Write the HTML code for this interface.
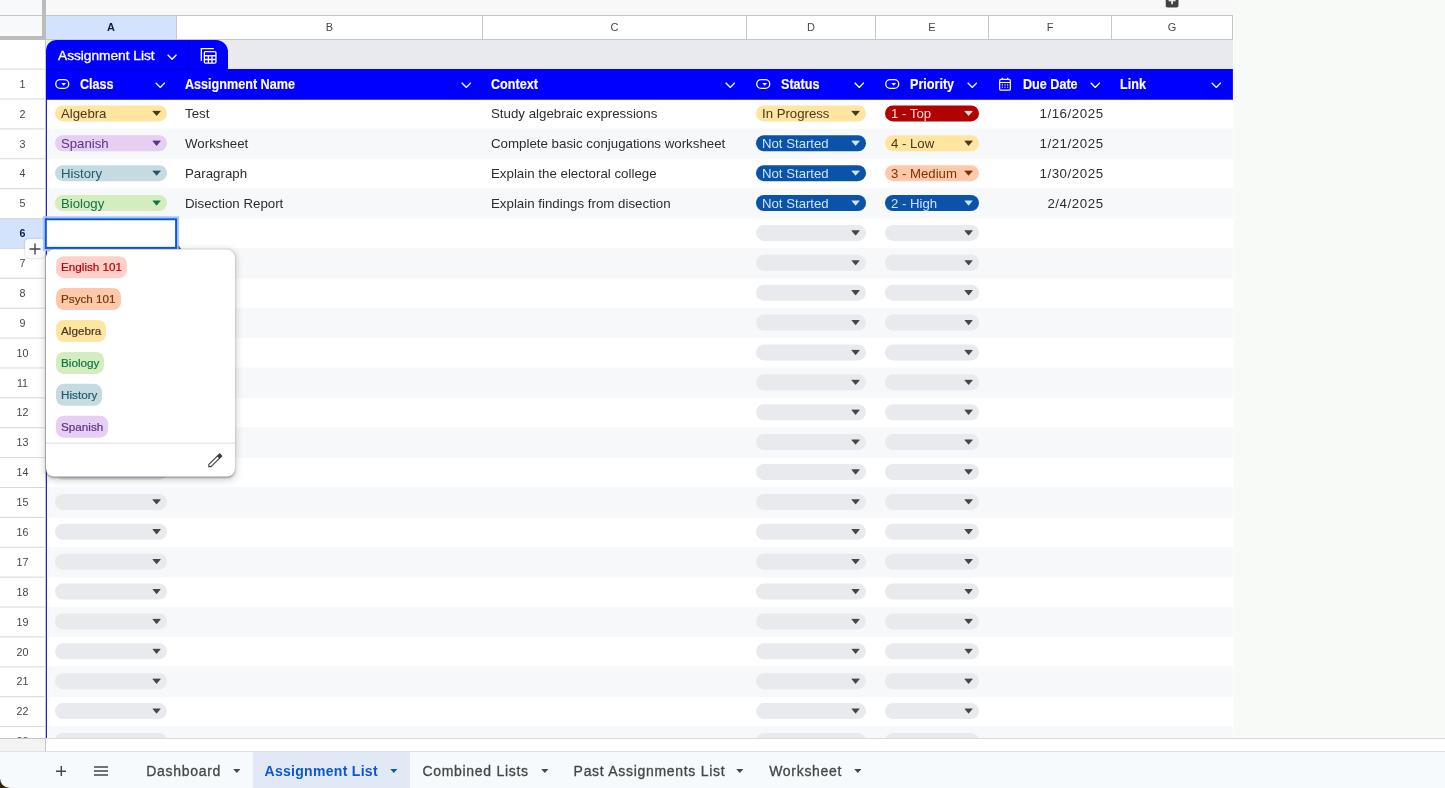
<!DOCTYPE html><html><head><meta charset="utf-8"><title>Assignment List</title><style>
*{box-sizing:border-box;margin:0;padding:0}
html,body{width:1445px;height:788px;overflow:hidden}
body{position:relative;background:#f8faf7;font-family:"Liberation Sans",sans-serif;font-size:13px;color:#1f1f1f}
.abs{position:absolute}
#stage{position:absolute;left:0;top:0;width:1445px;height:788px;will-change:transform}
#grid{position:absolute;left:0;top:0;width:1233px;height:738px;overflow:hidden;background:#fff}
.topstrip{left:0;top:0;width:1233px;height:15px;background:#f8f8f8}
.colhdr{top:15px;height:25px;background:#fff;border-top:1px solid #c4c7c5;border-bottom:1px solid #c4c7c5;border-right:1px solid #c4c7c5;font-size:11px;color:#444746;text-align:center;line-height:22px}
.colhdr.sel{background:#d3e3fd;color:#041e49;font-weight:bold}
.rowhdr{left:0;width:45px;font-size:10.7px;color:#444746;text-align:center}
.rowhdr span{position:absolute;left:0;width:45px;text-align:center;line-height:12px}
.rowhdr.sel{color:#041e49;font-weight:bold}
.band{left:47px;width:1186px}
.cell{top:0;font-size:13.3px;line-height:16px;white-space:nowrap;color:#2b2d30}
.date{letter-spacing:.55px}
.chip{top:0;height:16.2px;border-radius:8.1px;font-size:13.2px;line-height:17.4px;padding-left:6.3px;white-space:nowrap;overflow:hidden}
.chip svg{position:absolute;right:6.3px;top:5.2px}
.hd{color:#fff;font-weight:bold;font-size:14px;line-height:16px;white-space:nowrap;transform-origin:0 50%;transform:scaleX(.9);-webkit-text-stroke:.15px #fff}
.tabtxt{font-size:14px;color:#444746;white-space:nowrap;letter-spacing:.7px;line-height:18px;-webkit-text-stroke:.3px #444746}
.pop{left:46px;top:0;transform:translateY(249.6px);width:189px;height:226.6px;background:#fff;border-radius:8px;box-shadow:0 1px 2px rgba(60,64,67,.45),0 2px 6px 2px rgba(60,64,67,.2)}
.pchip{left:10px;height:22px;border-radius:8px;font-size:11.7px;line-height:22px;padding:0 5px;white-space:nowrap}
</style></head><body>
<div id="stage">
<div id="grid">
<div class="abs topstrip"></div>
<div class="abs" style="left:46px;top:40px;width:1187px;height:29px;background:#e8eaed"></div>
<svg class="abs" style="left:0;top:0" width="1234" height="738" viewBox="0 0 1234 738"><rect x="48.2" y="128.47" width="1186" height="30.54" fill="#f6f8f9"/><rect x="48.2" y="188.24" width="1186" height="30.54" fill="#f6f8f9"/><rect x="48.2" y="248.01" width="1186" height="30.54" fill="#f6f8f9"/><rect x="48.2" y="307.78" width="1186" height="30.54" fill="#f6f8f9"/><rect x="48.2" y="367.55" width="1186" height="30.54" fill="#f6f8f9"/><rect x="48.2" y="427.32" width="1186" height="30.54" fill="#f6f8f9"/><rect x="48.2" y="487.09" width="1186" height="30.54" fill="#f6f8f9"/><rect x="48.2" y="546.86" width="1186" height="30.54" fill="#f6f8f9"/><rect x="48.2" y="606.63" width="1186" height="30.54" fill="#f6f8f9"/><rect x="48.2" y="666.40" width="1186" height="30.54" fill="#f6f8f9"/><rect x="48.2" y="726.17" width="1186" height="30.54" fill="#f6f8f9"/></svg>
<div class="abs chip" style="left:54.7px;transform:translateY(105.38px);width:112.7px;background:#ffe5a0;color:#473821">Algebra<svg width="9.2" height="5.8" viewBox="0 0 9 5" preserveAspectRatio="none"><path d="M0.9 0.3 H8.1 Q8.8 0.3 8.3 0.9 L4.9 4.5 Q4.5 4.9 4.1 4.5 L0.7 0.9 Q0.2 0.3 0.9 0.3Z" fill="#473821"/></svg></div>
<div class="abs cell" style="left:185px;transform:translateY(106.03px)">Test</div>
<div class="abs cell" style="left:491px;transform:translateY(106.03px)">Study algebraic expressions</div>
<div class="abs chip" style="left:755.7px;transform:translateY(105.38px);width:110.7px;background:#ffe5a0;color:#473821">In Progress<svg width="9.2" height="5.8" viewBox="0 0 9 5" preserveAspectRatio="none"><path d="M0.9 0.3 H8.1 Q8.8 0.3 8.3 0.9 L4.9 4.5 Q4.5 4.9 4.1 4.5 L0.7 0.9 Q0.2 0.3 0.9 0.3Z" fill="#473821"/></svg></div>
<div class="abs chip" style="left:884.7px;transform:translateY(105.38px);width:94.7px;background:#b10202;color:#ffdcd8">1 - Top<svg width="9.2" height="5.8" viewBox="0 0 9 5" preserveAspectRatio="none"><path d="M0.9 0.3 H8.1 Q8.8 0.3 8.3 0.9 L4.9 4.5 Q4.5 4.9 4.1 4.5 L0.7 0.9 Q0.2 0.3 0.9 0.3Z" fill="#ffdcd8"/></svg></div>
<div class="abs cell date" style="left:989px;width:114.6px;text-align:right;transform:translateY(106.03px)">1/16/2025</div>
<div class="abs chip" style="left:54.7px;transform:translateY(135.26px);width:112.7px;background:#e6cff2;color:#5a3286">Spanish<svg width="9.2" height="5.8" viewBox="0 0 9 5" preserveAspectRatio="none"><path d="M0.9 0.3 H8.1 Q8.8 0.3 8.3 0.9 L4.9 4.5 Q4.5 4.9 4.1 4.5 L0.7 0.9 Q0.2 0.3 0.9 0.3Z" fill="#5a3286"/></svg></div>
<div class="abs cell" style="left:185px;transform:translateY(135.91px)">Worksheet</div>
<div class="abs cell" style="left:491px;transform:translateY(135.91px)">Complete basic conjugations worksheet</div>
<div class="abs chip" style="left:755.7px;transform:translateY(135.26px);width:110.7px;background:#0a53a8;color:#cbe6f9">Not Started<svg width="9.2" height="5.8" viewBox="0 0 9 5" preserveAspectRatio="none"><path d="M0.9 0.3 H8.1 Q8.8 0.3 8.3 0.9 L4.9 4.5 Q4.5 4.9 4.1 4.5 L0.7 0.9 Q0.2 0.3 0.9 0.3Z" fill="#cbe6f9"/></svg></div>
<div class="abs chip" style="left:884.7px;transform:translateY(135.26px);width:94.7px;background:#ffe5a0;color:#473821">4 - Low<svg width="9.2" height="5.8" viewBox="0 0 9 5" preserveAspectRatio="none"><path d="M0.9 0.3 H8.1 Q8.8 0.3 8.3 0.9 L4.9 4.5 Q4.5 4.9 4.1 4.5 L0.7 0.9 Q0.2 0.3 0.9 0.3Z" fill="#473821"/></svg></div>
<div class="abs cell date" style="left:989px;width:114.6px;text-align:right;transform:translateY(135.91px)">1/21/2025</div>
<div class="abs chip" style="left:54.7px;transform:translateY(165.15px);width:112.7px;background:#c6dbe1;color:#215a6c">History<svg width="9.2" height="5.8" viewBox="0 0 9 5" preserveAspectRatio="none"><path d="M0.9 0.3 H8.1 Q8.8 0.3 8.3 0.9 L4.9 4.5 Q4.5 4.9 4.1 4.5 L0.7 0.9 Q0.2 0.3 0.9 0.3Z" fill="#215a6c"/></svg></div>
<div class="abs cell" style="left:185px;transform:translateY(165.80px)">Paragraph</div>
<div class="abs cell" style="left:491px;transform:translateY(165.80px)">Explain the electoral college</div>
<div class="abs chip" style="left:755.7px;transform:translateY(165.15px);width:110.7px;background:#0a53a8;color:#cbe6f9">Not Started<svg width="9.2" height="5.8" viewBox="0 0 9 5" preserveAspectRatio="none"><path d="M0.9 0.3 H8.1 Q8.8 0.3 8.3 0.9 L4.9 4.5 Q4.5 4.9 4.1 4.5 L0.7 0.9 Q0.2 0.3 0.9 0.3Z" fill="#cbe6f9"/></svg></div>
<div class="abs chip" style="left:884.7px;transform:translateY(165.15px);width:94.7px;background:#ffc8aa;color:#753800">3 - Medium<svg width="9.2" height="5.8" viewBox="0 0 9 5" preserveAspectRatio="none"><path d="M0.9 0.3 H8.1 Q8.8 0.3 8.3 0.9 L4.9 4.5 Q4.5 4.9 4.1 4.5 L0.7 0.9 Q0.2 0.3 0.9 0.3Z" fill="#753800"/></svg></div>
<div class="abs cell date" style="left:989px;width:114.6px;text-align:right;transform:translateY(165.80px)">1/30/2025</div>
<div class="abs chip" style="left:54.7px;transform:translateY(195.03px);width:112.7px;background:#d4edbc;color:#11734b">Biology<svg width="9.2" height="5.8" viewBox="0 0 9 5" preserveAspectRatio="none"><path d="M0.9 0.3 H8.1 Q8.8 0.3 8.3 0.9 L4.9 4.5 Q4.5 4.9 4.1 4.5 L0.7 0.9 Q0.2 0.3 0.9 0.3Z" fill="#11734b"/></svg></div>
<div class="abs cell" style="left:185px;transform:translateY(195.68px)">Disection Report</div>
<div class="abs cell" style="left:491px;transform:translateY(195.68px)">Explain findings from disection</div>
<div class="abs chip" style="left:755.7px;transform:translateY(195.03px);width:110.7px;background:#0a53a8;color:#cbe6f9">Not Started<svg width="9.2" height="5.8" viewBox="0 0 9 5" preserveAspectRatio="none"><path d="M0.9 0.3 H8.1 Q8.8 0.3 8.3 0.9 L4.9 4.5 Q4.5 4.9 4.1 4.5 L0.7 0.9 Q0.2 0.3 0.9 0.3Z" fill="#cbe6f9"/></svg></div>
<div class="abs chip" style="left:884.7px;transform:translateY(195.03px);width:94.7px;background:#0a53a8;color:#cbe6f9">2 - High<svg width="9.2" height="5.8" viewBox="0 0 9 5" preserveAspectRatio="none"><path d="M0.9 0.3 H8.1 Q8.8 0.3 8.3 0.9 L4.9 4.5 Q4.5 4.9 4.1 4.5 L0.7 0.9 Q0.2 0.3 0.9 0.3Z" fill="#cbe6f9"/></svg></div>
<div class="abs cell date" style="left:989px;width:114.6px;text-align:right;transform:translateY(195.68px)">2/4/2025</div>
<div class="abs chip" style="left:755.7px;transform:translateY(224.92px);width:110.7px;background:#e8eaed;color:#444746"><svg width="9.2" height="5.8" viewBox="0 0 9 5" preserveAspectRatio="none"><path d="M0.9 0.3 H8.1 Q8.8 0.3 8.3 0.9 L4.9 4.5 Q4.5 4.9 4.1 4.5 L0.7 0.9 Q0.2 0.3 0.9 0.3Z" fill="#444746"/></svg></div>
<div class="abs chip" style="left:884.7px;transform:translateY(224.92px);width:94.7px;background:#e8eaed;color:#444746"><svg width="9.2" height="5.8" viewBox="0 0 9 5" preserveAspectRatio="none"><path d="M0.9 0.3 H8.1 Q8.8 0.3 8.3 0.9 L4.9 4.5 Q4.5 4.9 4.1 4.5 L0.7 0.9 Q0.2 0.3 0.9 0.3Z" fill="#444746"/></svg></div>
<div class="abs chip" style="left:54.7px;transform:translateY(254.80px);width:112.7px;background:#e8eaed;color:#444746"><svg width="9.2" height="5.8" viewBox="0 0 9 5" preserveAspectRatio="none"><path d="M0.9 0.3 H8.1 Q8.8 0.3 8.3 0.9 L4.9 4.5 Q4.5 4.9 4.1 4.5 L0.7 0.9 Q0.2 0.3 0.9 0.3Z" fill="#444746"/></svg></div>
<div class="abs chip" style="left:755.7px;transform:translateY(254.80px);width:110.7px;background:#e8eaed;color:#444746"><svg width="9.2" height="5.8" viewBox="0 0 9 5" preserveAspectRatio="none"><path d="M0.9 0.3 H8.1 Q8.8 0.3 8.3 0.9 L4.9 4.5 Q4.5 4.9 4.1 4.5 L0.7 0.9 Q0.2 0.3 0.9 0.3Z" fill="#444746"/></svg></div>
<div class="abs chip" style="left:884.7px;transform:translateY(254.80px);width:94.7px;background:#e8eaed;color:#444746"><svg width="9.2" height="5.8" viewBox="0 0 9 5" preserveAspectRatio="none"><path d="M0.9 0.3 H8.1 Q8.8 0.3 8.3 0.9 L4.9 4.5 Q4.5 4.9 4.1 4.5 L0.7 0.9 Q0.2 0.3 0.9 0.3Z" fill="#444746"/></svg></div>
<div class="abs chip" style="left:54.7px;transform:translateY(284.69px);width:112.7px;background:#e8eaed;color:#444746"><svg width="9.2" height="5.8" viewBox="0 0 9 5" preserveAspectRatio="none"><path d="M0.9 0.3 H8.1 Q8.8 0.3 8.3 0.9 L4.9 4.5 Q4.5 4.9 4.1 4.5 L0.7 0.9 Q0.2 0.3 0.9 0.3Z" fill="#444746"/></svg></div>
<div class="abs chip" style="left:755.7px;transform:translateY(284.69px);width:110.7px;background:#e8eaed;color:#444746"><svg width="9.2" height="5.8" viewBox="0 0 9 5" preserveAspectRatio="none"><path d="M0.9 0.3 H8.1 Q8.8 0.3 8.3 0.9 L4.9 4.5 Q4.5 4.9 4.1 4.5 L0.7 0.9 Q0.2 0.3 0.9 0.3Z" fill="#444746"/></svg></div>
<div class="abs chip" style="left:884.7px;transform:translateY(284.69px);width:94.7px;background:#e8eaed;color:#444746"><svg width="9.2" height="5.8" viewBox="0 0 9 5" preserveAspectRatio="none"><path d="M0.9 0.3 H8.1 Q8.8 0.3 8.3 0.9 L4.9 4.5 Q4.5 4.9 4.1 4.5 L0.7 0.9 Q0.2 0.3 0.9 0.3Z" fill="#444746"/></svg></div>
<div class="abs chip" style="left:54.7px;transform:translateY(314.57px);width:112.7px;background:#e8eaed;color:#444746"><svg width="9.2" height="5.8" viewBox="0 0 9 5" preserveAspectRatio="none"><path d="M0.9 0.3 H8.1 Q8.8 0.3 8.3 0.9 L4.9 4.5 Q4.5 4.9 4.1 4.5 L0.7 0.9 Q0.2 0.3 0.9 0.3Z" fill="#444746"/></svg></div>
<div class="abs chip" style="left:755.7px;transform:translateY(314.57px);width:110.7px;background:#e8eaed;color:#444746"><svg width="9.2" height="5.8" viewBox="0 0 9 5" preserveAspectRatio="none"><path d="M0.9 0.3 H8.1 Q8.8 0.3 8.3 0.9 L4.9 4.5 Q4.5 4.9 4.1 4.5 L0.7 0.9 Q0.2 0.3 0.9 0.3Z" fill="#444746"/></svg></div>
<div class="abs chip" style="left:884.7px;transform:translateY(314.57px);width:94.7px;background:#e8eaed;color:#444746"><svg width="9.2" height="5.8" viewBox="0 0 9 5" preserveAspectRatio="none"><path d="M0.9 0.3 H8.1 Q8.8 0.3 8.3 0.9 L4.9 4.5 Q4.5 4.9 4.1 4.5 L0.7 0.9 Q0.2 0.3 0.9 0.3Z" fill="#444746"/></svg></div>
<div class="abs chip" style="left:54.7px;transform:translateY(344.46px);width:112.7px;background:#e8eaed;color:#444746"><svg width="9.2" height="5.8" viewBox="0 0 9 5" preserveAspectRatio="none"><path d="M0.9 0.3 H8.1 Q8.8 0.3 8.3 0.9 L4.9 4.5 Q4.5 4.9 4.1 4.5 L0.7 0.9 Q0.2 0.3 0.9 0.3Z" fill="#444746"/></svg></div>
<div class="abs chip" style="left:755.7px;transform:translateY(344.46px);width:110.7px;background:#e8eaed;color:#444746"><svg width="9.2" height="5.8" viewBox="0 0 9 5" preserveAspectRatio="none"><path d="M0.9 0.3 H8.1 Q8.8 0.3 8.3 0.9 L4.9 4.5 Q4.5 4.9 4.1 4.5 L0.7 0.9 Q0.2 0.3 0.9 0.3Z" fill="#444746"/></svg></div>
<div class="abs chip" style="left:884.7px;transform:translateY(344.46px);width:94.7px;background:#e8eaed;color:#444746"><svg width="9.2" height="5.8" viewBox="0 0 9 5" preserveAspectRatio="none"><path d="M0.9 0.3 H8.1 Q8.8 0.3 8.3 0.9 L4.9 4.5 Q4.5 4.9 4.1 4.5 L0.7 0.9 Q0.2 0.3 0.9 0.3Z" fill="#444746"/></svg></div>
<div class="abs chip" style="left:54.7px;transform:translateY(374.34px);width:112.7px;background:#e8eaed;color:#444746"><svg width="9.2" height="5.8" viewBox="0 0 9 5" preserveAspectRatio="none"><path d="M0.9 0.3 H8.1 Q8.8 0.3 8.3 0.9 L4.9 4.5 Q4.5 4.9 4.1 4.5 L0.7 0.9 Q0.2 0.3 0.9 0.3Z" fill="#444746"/></svg></div>
<div class="abs chip" style="left:755.7px;transform:translateY(374.34px);width:110.7px;background:#e8eaed;color:#444746"><svg width="9.2" height="5.8" viewBox="0 0 9 5" preserveAspectRatio="none"><path d="M0.9 0.3 H8.1 Q8.8 0.3 8.3 0.9 L4.9 4.5 Q4.5 4.9 4.1 4.5 L0.7 0.9 Q0.2 0.3 0.9 0.3Z" fill="#444746"/></svg></div>
<div class="abs chip" style="left:884.7px;transform:translateY(374.34px);width:94.7px;background:#e8eaed;color:#444746"><svg width="9.2" height="5.8" viewBox="0 0 9 5" preserveAspectRatio="none"><path d="M0.9 0.3 H8.1 Q8.8 0.3 8.3 0.9 L4.9 4.5 Q4.5 4.9 4.1 4.5 L0.7 0.9 Q0.2 0.3 0.9 0.3Z" fill="#444746"/></svg></div>
<div class="abs chip" style="left:54.7px;transform:translateY(404.23px);width:112.7px;background:#e8eaed;color:#444746"><svg width="9.2" height="5.8" viewBox="0 0 9 5" preserveAspectRatio="none"><path d="M0.9 0.3 H8.1 Q8.8 0.3 8.3 0.9 L4.9 4.5 Q4.5 4.9 4.1 4.5 L0.7 0.9 Q0.2 0.3 0.9 0.3Z" fill="#444746"/></svg></div>
<div class="abs chip" style="left:755.7px;transform:translateY(404.23px);width:110.7px;background:#e8eaed;color:#444746"><svg width="9.2" height="5.8" viewBox="0 0 9 5" preserveAspectRatio="none"><path d="M0.9 0.3 H8.1 Q8.8 0.3 8.3 0.9 L4.9 4.5 Q4.5 4.9 4.1 4.5 L0.7 0.9 Q0.2 0.3 0.9 0.3Z" fill="#444746"/></svg></div>
<div class="abs chip" style="left:884.7px;transform:translateY(404.23px);width:94.7px;background:#e8eaed;color:#444746"><svg width="9.2" height="5.8" viewBox="0 0 9 5" preserveAspectRatio="none"><path d="M0.9 0.3 H8.1 Q8.8 0.3 8.3 0.9 L4.9 4.5 Q4.5 4.9 4.1 4.5 L0.7 0.9 Q0.2 0.3 0.9 0.3Z" fill="#444746"/></svg></div>
<div class="abs chip" style="left:54.7px;transform:translateY(434.11px);width:112.7px;background:#e8eaed;color:#444746"><svg width="9.2" height="5.8" viewBox="0 0 9 5" preserveAspectRatio="none"><path d="M0.9 0.3 H8.1 Q8.8 0.3 8.3 0.9 L4.9 4.5 Q4.5 4.9 4.1 4.5 L0.7 0.9 Q0.2 0.3 0.9 0.3Z" fill="#444746"/></svg></div>
<div class="abs chip" style="left:755.7px;transform:translateY(434.11px);width:110.7px;background:#e8eaed;color:#444746"><svg width="9.2" height="5.8" viewBox="0 0 9 5" preserveAspectRatio="none"><path d="M0.9 0.3 H8.1 Q8.8 0.3 8.3 0.9 L4.9 4.5 Q4.5 4.9 4.1 4.5 L0.7 0.9 Q0.2 0.3 0.9 0.3Z" fill="#444746"/></svg></div>
<div class="abs chip" style="left:884.7px;transform:translateY(434.11px);width:94.7px;background:#e8eaed;color:#444746"><svg width="9.2" height="5.8" viewBox="0 0 9 5" preserveAspectRatio="none"><path d="M0.9 0.3 H8.1 Q8.8 0.3 8.3 0.9 L4.9 4.5 Q4.5 4.9 4.1 4.5 L0.7 0.9 Q0.2 0.3 0.9 0.3Z" fill="#444746"/></svg></div>
<div class="abs chip" style="left:54.7px;transform:translateY(464.00px);width:112.7px;background:#e8eaed;color:#444746"><svg width="9.2" height="5.8" viewBox="0 0 9 5" preserveAspectRatio="none"><path d="M0.9 0.3 H8.1 Q8.8 0.3 8.3 0.9 L4.9 4.5 Q4.5 4.9 4.1 4.5 L0.7 0.9 Q0.2 0.3 0.9 0.3Z" fill="#444746"/></svg></div>
<div class="abs chip" style="left:755.7px;transform:translateY(464.00px);width:110.7px;background:#e8eaed;color:#444746"><svg width="9.2" height="5.8" viewBox="0 0 9 5" preserveAspectRatio="none"><path d="M0.9 0.3 H8.1 Q8.8 0.3 8.3 0.9 L4.9 4.5 Q4.5 4.9 4.1 4.5 L0.7 0.9 Q0.2 0.3 0.9 0.3Z" fill="#444746"/></svg></div>
<div class="abs chip" style="left:884.7px;transform:translateY(464.00px);width:94.7px;background:#e8eaed;color:#444746"><svg width="9.2" height="5.8" viewBox="0 0 9 5" preserveAspectRatio="none"><path d="M0.9 0.3 H8.1 Q8.8 0.3 8.3 0.9 L4.9 4.5 Q4.5 4.9 4.1 4.5 L0.7 0.9 Q0.2 0.3 0.9 0.3Z" fill="#444746"/></svg></div>
<div class="abs chip" style="left:54.7px;transform:translateY(493.88px);width:112.7px;background:#e8eaed;color:#444746"><svg width="9.2" height="5.8" viewBox="0 0 9 5" preserveAspectRatio="none"><path d="M0.9 0.3 H8.1 Q8.8 0.3 8.3 0.9 L4.9 4.5 Q4.5 4.9 4.1 4.5 L0.7 0.9 Q0.2 0.3 0.9 0.3Z" fill="#444746"/></svg></div>
<div class="abs chip" style="left:755.7px;transform:translateY(493.88px);width:110.7px;background:#e8eaed;color:#444746"><svg width="9.2" height="5.8" viewBox="0 0 9 5" preserveAspectRatio="none"><path d="M0.9 0.3 H8.1 Q8.8 0.3 8.3 0.9 L4.9 4.5 Q4.5 4.9 4.1 4.5 L0.7 0.9 Q0.2 0.3 0.9 0.3Z" fill="#444746"/></svg></div>
<div class="abs chip" style="left:884.7px;transform:translateY(493.88px);width:94.7px;background:#e8eaed;color:#444746"><svg width="9.2" height="5.8" viewBox="0 0 9 5" preserveAspectRatio="none"><path d="M0.9 0.3 H8.1 Q8.8 0.3 8.3 0.9 L4.9 4.5 Q4.5 4.9 4.1 4.5 L0.7 0.9 Q0.2 0.3 0.9 0.3Z" fill="#444746"/></svg></div>
<div class="abs chip" style="left:54.7px;transform:translateY(523.77px);width:112.7px;background:#e8eaed;color:#444746"><svg width="9.2" height="5.8" viewBox="0 0 9 5" preserveAspectRatio="none"><path d="M0.9 0.3 H8.1 Q8.8 0.3 8.3 0.9 L4.9 4.5 Q4.5 4.9 4.1 4.5 L0.7 0.9 Q0.2 0.3 0.9 0.3Z" fill="#444746"/></svg></div>
<div class="abs chip" style="left:755.7px;transform:translateY(523.77px);width:110.7px;background:#e8eaed;color:#444746"><svg width="9.2" height="5.8" viewBox="0 0 9 5" preserveAspectRatio="none"><path d="M0.9 0.3 H8.1 Q8.8 0.3 8.3 0.9 L4.9 4.5 Q4.5 4.9 4.1 4.5 L0.7 0.9 Q0.2 0.3 0.9 0.3Z" fill="#444746"/></svg></div>
<div class="abs chip" style="left:884.7px;transform:translateY(523.77px);width:94.7px;background:#e8eaed;color:#444746"><svg width="9.2" height="5.8" viewBox="0 0 9 5" preserveAspectRatio="none"><path d="M0.9 0.3 H8.1 Q8.8 0.3 8.3 0.9 L4.9 4.5 Q4.5 4.9 4.1 4.5 L0.7 0.9 Q0.2 0.3 0.9 0.3Z" fill="#444746"/></svg></div>
<div class="abs chip" style="left:54.7px;transform:translateY(553.65px);width:112.7px;background:#e8eaed;color:#444746"><svg width="9.2" height="5.8" viewBox="0 0 9 5" preserveAspectRatio="none"><path d="M0.9 0.3 H8.1 Q8.8 0.3 8.3 0.9 L4.9 4.5 Q4.5 4.9 4.1 4.5 L0.7 0.9 Q0.2 0.3 0.9 0.3Z" fill="#444746"/></svg></div>
<div class="abs chip" style="left:755.7px;transform:translateY(553.65px);width:110.7px;background:#e8eaed;color:#444746"><svg width="9.2" height="5.8" viewBox="0 0 9 5" preserveAspectRatio="none"><path d="M0.9 0.3 H8.1 Q8.8 0.3 8.3 0.9 L4.9 4.5 Q4.5 4.9 4.1 4.5 L0.7 0.9 Q0.2 0.3 0.9 0.3Z" fill="#444746"/></svg></div>
<div class="abs chip" style="left:884.7px;transform:translateY(553.65px);width:94.7px;background:#e8eaed;color:#444746"><svg width="9.2" height="5.8" viewBox="0 0 9 5" preserveAspectRatio="none"><path d="M0.9 0.3 H8.1 Q8.8 0.3 8.3 0.9 L4.9 4.5 Q4.5 4.9 4.1 4.5 L0.7 0.9 Q0.2 0.3 0.9 0.3Z" fill="#444746"/></svg></div>
<div class="abs chip" style="left:54.7px;transform:translateY(583.54px);width:112.7px;background:#e8eaed;color:#444746"><svg width="9.2" height="5.8" viewBox="0 0 9 5" preserveAspectRatio="none"><path d="M0.9 0.3 H8.1 Q8.8 0.3 8.3 0.9 L4.9 4.5 Q4.5 4.9 4.1 4.5 L0.7 0.9 Q0.2 0.3 0.9 0.3Z" fill="#444746"/></svg></div>
<div class="abs chip" style="left:755.7px;transform:translateY(583.54px);width:110.7px;background:#e8eaed;color:#444746"><svg width="9.2" height="5.8" viewBox="0 0 9 5" preserveAspectRatio="none"><path d="M0.9 0.3 H8.1 Q8.8 0.3 8.3 0.9 L4.9 4.5 Q4.5 4.9 4.1 4.5 L0.7 0.9 Q0.2 0.3 0.9 0.3Z" fill="#444746"/></svg></div>
<div class="abs chip" style="left:884.7px;transform:translateY(583.54px);width:94.7px;background:#e8eaed;color:#444746"><svg width="9.2" height="5.8" viewBox="0 0 9 5" preserveAspectRatio="none"><path d="M0.9 0.3 H8.1 Q8.8 0.3 8.3 0.9 L4.9 4.5 Q4.5 4.9 4.1 4.5 L0.7 0.9 Q0.2 0.3 0.9 0.3Z" fill="#444746"/></svg></div>
<div class="abs chip" style="left:54.7px;transform:translateY(613.42px);width:112.7px;background:#e8eaed;color:#444746"><svg width="9.2" height="5.8" viewBox="0 0 9 5" preserveAspectRatio="none"><path d="M0.9 0.3 H8.1 Q8.8 0.3 8.3 0.9 L4.9 4.5 Q4.5 4.9 4.1 4.5 L0.7 0.9 Q0.2 0.3 0.9 0.3Z" fill="#444746"/></svg></div>
<div class="abs chip" style="left:755.7px;transform:translateY(613.42px);width:110.7px;background:#e8eaed;color:#444746"><svg width="9.2" height="5.8" viewBox="0 0 9 5" preserveAspectRatio="none"><path d="M0.9 0.3 H8.1 Q8.8 0.3 8.3 0.9 L4.9 4.5 Q4.5 4.9 4.1 4.5 L0.7 0.9 Q0.2 0.3 0.9 0.3Z" fill="#444746"/></svg></div>
<div class="abs chip" style="left:884.7px;transform:translateY(613.42px);width:94.7px;background:#e8eaed;color:#444746"><svg width="9.2" height="5.8" viewBox="0 0 9 5" preserveAspectRatio="none"><path d="M0.9 0.3 H8.1 Q8.8 0.3 8.3 0.9 L4.9 4.5 Q4.5 4.9 4.1 4.5 L0.7 0.9 Q0.2 0.3 0.9 0.3Z" fill="#444746"/></svg></div>
<div class="abs chip" style="left:54.7px;transform:translateY(643.31px);width:112.7px;background:#e8eaed;color:#444746"><svg width="9.2" height="5.8" viewBox="0 0 9 5" preserveAspectRatio="none"><path d="M0.9 0.3 H8.1 Q8.8 0.3 8.3 0.9 L4.9 4.5 Q4.5 4.9 4.1 4.5 L0.7 0.9 Q0.2 0.3 0.9 0.3Z" fill="#444746"/></svg></div>
<div class="abs chip" style="left:755.7px;transform:translateY(643.31px);width:110.7px;background:#e8eaed;color:#444746"><svg width="9.2" height="5.8" viewBox="0 0 9 5" preserveAspectRatio="none"><path d="M0.9 0.3 H8.1 Q8.8 0.3 8.3 0.9 L4.9 4.5 Q4.5 4.9 4.1 4.5 L0.7 0.9 Q0.2 0.3 0.9 0.3Z" fill="#444746"/></svg></div>
<div class="abs chip" style="left:884.7px;transform:translateY(643.31px);width:94.7px;background:#e8eaed;color:#444746"><svg width="9.2" height="5.8" viewBox="0 0 9 5" preserveAspectRatio="none"><path d="M0.9 0.3 H8.1 Q8.8 0.3 8.3 0.9 L4.9 4.5 Q4.5 4.9 4.1 4.5 L0.7 0.9 Q0.2 0.3 0.9 0.3Z" fill="#444746"/></svg></div>
<div class="abs chip" style="left:54.7px;transform:translateY(673.19px);width:112.7px;background:#e8eaed;color:#444746"><svg width="9.2" height="5.8" viewBox="0 0 9 5" preserveAspectRatio="none"><path d="M0.9 0.3 H8.1 Q8.8 0.3 8.3 0.9 L4.9 4.5 Q4.5 4.9 4.1 4.5 L0.7 0.9 Q0.2 0.3 0.9 0.3Z" fill="#444746"/></svg></div>
<div class="abs chip" style="left:755.7px;transform:translateY(673.19px);width:110.7px;background:#e8eaed;color:#444746"><svg width="9.2" height="5.8" viewBox="0 0 9 5" preserveAspectRatio="none"><path d="M0.9 0.3 H8.1 Q8.8 0.3 8.3 0.9 L4.9 4.5 Q4.5 4.9 4.1 4.5 L0.7 0.9 Q0.2 0.3 0.9 0.3Z" fill="#444746"/></svg></div>
<div class="abs chip" style="left:884.7px;transform:translateY(673.19px);width:94.7px;background:#e8eaed;color:#444746"><svg width="9.2" height="5.8" viewBox="0 0 9 5" preserveAspectRatio="none"><path d="M0.9 0.3 H8.1 Q8.8 0.3 8.3 0.9 L4.9 4.5 Q4.5 4.9 4.1 4.5 L0.7 0.9 Q0.2 0.3 0.9 0.3Z" fill="#444746"/></svg></div>
<div class="abs chip" style="left:54.7px;transform:translateY(703.08px);width:112.7px;background:#e8eaed;color:#444746"><svg width="9.2" height="5.8" viewBox="0 0 9 5" preserveAspectRatio="none"><path d="M0.9 0.3 H8.1 Q8.8 0.3 8.3 0.9 L4.9 4.5 Q4.5 4.9 4.1 4.5 L0.7 0.9 Q0.2 0.3 0.9 0.3Z" fill="#444746"/></svg></div>
<div class="abs chip" style="left:755.7px;transform:translateY(703.08px);width:110.7px;background:#e8eaed;color:#444746"><svg width="9.2" height="5.8" viewBox="0 0 9 5" preserveAspectRatio="none"><path d="M0.9 0.3 H8.1 Q8.8 0.3 8.3 0.9 L4.9 4.5 Q4.5 4.9 4.1 4.5 L0.7 0.9 Q0.2 0.3 0.9 0.3Z" fill="#444746"/></svg></div>
<div class="abs chip" style="left:884.7px;transform:translateY(703.08px);width:94.7px;background:#e8eaed;color:#444746"><svg width="9.2" height="5.8" viewBox="0 0 9 5" preserveAspectRatio="none"><path d="M0.9 0.3 H8.1 Q8.8 0.3 8.3 0.9 L4.9 4.5 Q4.5 4.9 4.1 4.5 L0.7 0.9 Q0.2 0.3 0.9 0.3Z" fill="#444746"/></svg></div>
<div class="abs chip" style="left:54.7px;transform:translateY(732.96px);width:112.7px;background:#e8eaed;color:#444746"><svg width="9.2" height="5.8" viewBox="0 0 9 5" preserveAspectRatio="none"><path d="M0.9 0.3 H8.1 Q8.8 0.3 8.3 0.9 L4.9 4.5 Q4.5 4.9 4.1 4.5 L0.7 0.9 Q0.2 0.3 0.9 0.3Z" fill="#444746"/></svg></div>
<div class="abs chip" style="left:755.7px;transform:translateY(732.96px);width:110.7px;background:#e8eaed;color:#444746"><svg width="9.2" height="5.8" viewBox="0 0 9 5" preserveAspectRatio="none"><path d="M0.9 0.3 H8.1 Q8.8 0.3 8.3 0.9 L4.9 4.5 Q4.5 4.9 4.1 4.5 L0.7 0.9 Q0.2 0.3 0.9 0.3Z" fill="#444746"/></svg></div>
<div class="abs chip" style="left:884.7px;transform:translateY(732.96px);width:94.7px;background:#e8eaed;color:#444746"><svg width="9.2" height="5.8" viewBox="0 0 9 5" preserveAspectRatio="none"><path d="M0.9 0.3 H8.1 Q8.8 0.3 8.3 0.9 L4.9 4.5 Q4.5 4.9 4.1 4.5 L0.7 0.9 Q0.2 0.3 0.9 0.3Z" fill="#444746"/></svg></div>
<div class="abs chip" style="left:54.7px;transform:translateY(762.85px);width:112.7px;background:#e8eaed;color:#444746"><svg width="9.2" height="5.8" viewBox="0 0 9 5" preserveAspectRatio="none"><path d="M0.9 0.3 H8.1 Q8.8 0.3 8.3 0.9 L4.9 4.5 Q4.5 4.9 4.1 4.5 L0.7 0.9 Q0.2 0.3 0.9 0.3Z" fill="#444746"/></svg></div>
<div class="abs chip" style="left:755.7px;transform:translateY(762.85px);width:110.7px;background:#e8eaed;color:#444746"><svg width="9.2" height="5.8" viewBox="0 0 9 5" preserveAspectRatio="none"><path d="M0.9 0.3 H8.1 Q8.8 0.3 8.3 0.9 L4.9 4.5 Q4.5 4.9 4.1 4.5 L0.7 0.9 Q0.2 0.3 0.9 0.3Z" fill="#444746"/></svg></div>
<div class="abs chip" style="left:884.7px;transform:translateY(762.85px);width:94.7px;background:#e8eaed;color:#444746"><svg width="9.2" height="5.8" viewBox="0 0 9 5" preserveAspectRatio="none"><path d="M0.9 0.3 H8.1 Q8.8 0.3 8.3 0.9 L4.9 4.5 Q4.5 4.9 4.1 4.5 L0.7 0.9 Q0.2 0.3 0.9 0.3Z" fill="#444746"/></svg></div>
<div class="abs" style="left:45.5px;top:69px;width:1.4px;height:669px;background:#2222cc"></div>
<svg class="abs" style="left:0;top:0" width="1234" height="110" viewBox="0 0 1234 110"><rect x="46" y="69" width="1186.9" height="30.5" fill="#0000ff"/><rect x="46" y="98.5" width="1186.9" height="1" fill="#0000e0"/></svg>
<div class="abs" style="left:46px;top:40px;width:182px;height:30px;background:#0000ff;border-radius:10px 12px 0 0"></div>
<div class="abs" style="left:188px;top:40px;width:1px;height:29px;background:#0000c8"></div>
<div class="abs" style="left:46px;top:68.5px;width:182px;height:1px;background:#0000d2"></div>
<div class="abs" style="left:58px;top:48px;font-size:13.7px;-webkit-text-stroke:.35px #fff;color:#fff;line-height:16px;white-space:nowrap">Assignment List</div>
<svg class="abs" style="left:166.8px;top:54.0px" width="10.2" height="6.2" viewBox="0 0 10.2 6.2"><path d="M0.7 0.7 L5.10 5.20 L9.50 0.7" fill="none" stroke="#fff" stroke-width="1.4" stroke-linecap="butt" stroke-linejoin="miter"/></svg>
<svg class="abs" style="left:200px;top:48px" width="17" height="16" viewBox="0 0 17 16" fill="none" stroke="#fff" stroke-width="1.3"><path d="M1.35 13V0.55H13.8" stroke-width="1.35"/><rect x="4.35" y="3.55" width="11.6" height="11.65" rx="1.1"/><path d="M4.35 7.75H15.95M4.35 11.4H15.95" stroke-width="1.45"/><path d="M8.4 7.75V15.2M12 7.75V15.2" stroke-width="1.3"/></svg>
<svg class="abs" style="left:54.6px;top:79.0px" width="15" height="10" viewBox="0 0 15 10"><rect x="0.75" y="0.7" width="13" height="8.6" rx="4.3" fill="none" stroke="#fff" stroke-width="1.3"/><path d="M6.3 3.9H11.1L8.7 6.8Z" fill="#fff"/></svg>
<div class="abs hd" style="left:80px;top:76px">Class</div>
<svg class="abs" style="left:154.8px;top:81.8px" width="10.6" height="6.4" viewBox="0 0 10.6 6.4"><path d="M0.7 0.7 L5.30 5.40 L9.90 0.7" fill="none" stroke="#fff" stroke-width="1.4" stroke-linecap="butt" stroke-linejoin="miter"/></svg>
<div class="abs hd" style="left:185px;top:76px">Assignment Name</div>
<svg class="abs" style="left:460.8px;top:81.8px" width="10.6" height="6.4" viewBox="0 0 10.6 6.4"><path d="M0.7 0.7 L5.30 5.40 L9.90 0.7" fill="none" stroke="#fff" stroke-width="1.4" stroke-linecap="butt" stroke-linejoin="miter"/></svg>
<div class="abs hd" style="left:491px;top:76px">Context</div>
<svg class="abs" style="left:724.8px;top:81.8px" width="10.6" height="6.4" viewBox="0 0 10.6 6.4"><path d="M0.7 0.7 L5.30 5.40 L9.90 0.7" fill="none" stroke="#fff" stroke-width="1.4" stroke-linecap="butt" stroke-linejoin="miter"/></svg>
<svg class="abs" style="left:755.6px;top:79.0px" width="15" height="10" viewBox="0 0 15 10"><rect x="0.75" y="0.7" width="13" height="8.6" rx="4.3" fill="none" stroke="#fff" stroke-width="1.3"/><path d="M6.3 3.9H11.1L8.7 6.8Z" fill="#fff"/></svg>
<div class="abs hd" style="left:781px;top:76px">Status</div>
<svg class="abs" style="left:853.8px;top:81.8px" width="10.6" height="6.4" viewBox="0 0 10.6 6.4"><path d="M0.7 0.7 L5.30 5.40 L9.90 0.7" fill="none" stroke="#fff" stroke-width="1.4" stroke-linecap="butt" stroke-linejoin="miter"/></svg>
<svg class="abs" style="left:884.6px;top:79.0px" width="15" height="10" viewBox="0 0 15 10"><rect x="0.75" y="0.7" width="13" height="8.6" rx="4.3" fill="none" stroke="#fff" stroke-width="1.3"/><path d="M6.3 3.9H11.1L8.7 6.8Z" fill="#fff"/></svg>
<div class="abs hd" style="left:910px;top:76px">Priority</div>
<svg class="abs" style="left:966.8px;top:81.8px" width="10.6" height="6.4" viewBox="0 0 10.6 6.4"><path d="M0.7 0.7 L5.30 5.40 L9.90 0.7" fill="none" stroke="#fff" stroke-width="1.4" stroke-linecap="butt" stroke-linejoin="miter"/></svg>
<svg class="abs" style="left:999px;top:77px" width="12" height="14" viewBox="0 0 12 14"><rect x="0.65" y="2.4" width="10.7" height="10.8" rx="1.3" fill="none" stroke="#fff" stroke-width="1.2"/><path d="M0.7 5.5H11.3" stroke="#fff" stroke-width="1.1"/><path d="M3.3 0.7V3M8.7 0.7V3" stroke="#fff" stroke-width="1.3"/><path d="M2.8 7.9h1.2M5.4 7.9h1.2M8 7.9h1.2M2.8 10.2h1.2M5.4 10.2h1.2M8 10.2h1.2" stroke="#e8e8ff" stroke-width="1.1"/></svg>
<div class="abs hd" style="left:1023px;top:76px">Due Date</div>
<svg class="abs" style="left:1089.8px;top:81.8px" width="10.6" height="6.4" viewBox="0 0 10.6 6.4"><path d="M0.7 0.7 L5.30 5.40 L9.90 0.7" fill="none" stroke="#fff" stroke-width="1.4" stroke-linecap="butt" stroke-linejoin="miter"/></svg>
<div class="abs hd" style="left:1120px;top:76px">Link</div>
<svg class="abs" style="left:1210.8px;top:81.8px" width="10.6" height="6.4" viewBox="0 0 10.6 6.4"><path d="M0.7 0.7 L5.30 5.40 L9.90 0.7" fill="none" stroke="#fff" stroke-width="1.4" stroke-linecap="butt" stroke-linejoin="miter"/></svg>
<div class="abs colhdr sel" style="left:46px;width:131px">A</div>
<div class="abs colhdr" style="left:177px;width:306px">B</div>
<div class="abs colhdr" style="left:483px;width:264px">C</div>
<div class="abs colhdr" style="left:747px;width:129px">D</div>
<div class="abs colhdr" style="left:876px;width:113px">E</div>
<div class="abs colhdr" style="left:989px;width:123px">F</div>
<div class="abs colhdr" style="left:1112px;width:121px">G</div>
<div class="abs" style="left:0;top:40px;width:46px;height:698px;background:#fff;border-right:1px solid #c4c7c5"></div>
<svg class="abs" style="left:0;top:0" width="46" height="738" viewBox="0 0 46 738"><rect x="0" y="219.03" width="44.6" height="28.89" fill="#d3e3fd"/><rect x="0" y="68.60" width="44.7" height="1" fill="#d5d7d8"/><rect x="0" y="98.48" width="44.7" height="1" fill="#d5d7d8"/><rect x="0" y="128.37" width="44.7" height="1" fill="#d5d7d8"/><rect x="0" y="158.25" width="44.7" height="1" fill="#d5d7d8"/><rect x="0" y="188.14" width="44.7" height="1" fill="#d5d7d8"/><rect x="0" y="218.03" width="44.7" height="1" fill="#d5d7d8"/><rect x="0" y="247.91" width="44.7" height="1" fill="#d5d7d8"/><rect x="0" y="277.80" width="44.7" height="1" fill="#d5d7d8"/><rect x="0" y="307.68" width="44.7" height="1" fill="#d5d7d8"/><rect x="0" y="337.57" width="44.7" height="1" fill="#d5d7d8"/><rect x="0" y="367.45" width="44.7" height="1" fill="#d5d7d8"/><rect x="0" y="397.34" width="44.7" height="1" fill="#d5d7d8"/><rect x="0" y="427.22" width="44.7" height="1" fill="#d5d7d8"/><rect x="0" y="457.11" width="44.7" height="1" fill="#d5d7d8"/><rect x="0" y="486.99" width="44.7" height="1" fill="#d5d7d8"/><rect x="0" y="516.88" width="44.7" height="1" fill="#d5d7d8"/><rect x="0" y="546.76" width="44.7" height="1" fill="#d5d7d8"/><rect x="0" y="576.65" width="44.7" height="1" fill="#d5d7d8"/><rect x="0" y="606.53" width="44.7" height="1" fill="#d5d7d8"/><rect x="0" y="636.42" width="44.7" height="1" fill="#d5d7d8"/><rect x="0" y="666.30" width="44.7" height="1" fill="#d5d7d8"/><rect x="0" y="696.19" width="44.7" height="1" fill="#d5d7d8"/><rect x="0" y="726.07" width="44.7" height="1" fill="#d5d7d8"/><rect x="0" y="755.96" width="44.7" height="1" fill="#d5d7d8"/><rect x="0" y="785.84" width="44.7" height="1" fill="#d5d7d8"/></svg>
<div class="abs rowhdr" style="top:69.00px;height:29.89px"><span style="top:8.74px">1</span></div>
<div class="abs rowhdr" style="top:98.89px;height:29.89px"><span style="top:8.74px">2</span></div>
<div class="abs rowhdr" style="top:128.77px;height:29.88px"><span style="top:8.74px">3</span></div>
<div class="abs rowhdr" style="top:158.66px;height:29.89px"><span style="top:8.74px">4</span></div>
<div class="abs rowhdr" style="top:188.54px;height:29.88px"><span style="top:8.74px">5</span></div>
<div class="abs rowhdr sel" style="top:218.43px;height:29.88px"><span style="top:8.74px">6</span></div>
<div class="abs rowhdr" style="top:248.31px;height:29.89px"><span style="top:8.74px">7</span></div>
<div class="abs rowhdr" style="top:278.20px;height:29.88px"><span style="top:8.74px">8</span></div>
<div class="abs rowhdr" style="top:308.08px;height:29.88px"><span style="top:8.74px">9</span></div>
<div class="abs rowhdr" style="top:337.97px;height:29.88px"><span style="top:8.74px">10</span></div>
<div class="abs rowhdr" style="top:367.85px;height:29.88px"><span style="top:8.74px">11</span></div>
<div class="abs rowhdr" style="top:397.74px;height:29.88px"><span style="top:8.74px">12</span></div>
<div class="abs rowhdr" style="top:427.62px;height:29.88px"><span style="top:8.74px">13</span></div>
<div class="abs rowhdr" style="top:457.50px;height:29.89px"><span style="top:8.74px">14</span></div>
<div class="abs rowhdr" style="top:487.39px;height:29.89px"><span style="top:8.74px">15</span></div>
<div class="abs rowhdr" style="top:517.28px;height:29.88px"><span style="top:8.74px">16</span></div>
<div class="abs rowhdr" style="top:547.16px;height:29.88px"><span style="top:8.74px">17</span></div>
<div class="abs rowhdr" style="top:577.05px;height:29.88px"><span style="top:8.74px">18</span></div>
<div class="abs rowhdr" style="top:606.93px;height:29.88px"><span style="top:8.74px">19</span></div>
<div class="abs rowhdr" style="top:636.82px;height:29.88px"><span style="top:8.74px">20</span></div>
<div class="abs rowhdr" style="top:666.70px;height:29.88px"><span style="top:8.74px">21</span></div>
<div class="abs rowhdr" style="top:696.59px;height:29.88px"><span style="top:8.74px">22</span></div>
<div class="abs rowhdr" style="top:726.47px;height:29.88px"><span style="top:8.74px">23</span></div>
<div class="abs rowhdr" style="top:756.36px;height:29.88px"><span style="top:8.74px">24</span></div>
<div class="abs" style="left:0;top:0;width:46px;height:40px;background:#f8f9fa"></div>
<div class="abs" style="left:0;top:15px;width:42px;height:1px;background:#c4c7c5"></div>
<div class="abs" style="left:41.5px;top:0;width:4.5px;height:39.5px;background:#bcbcbc"></div>
<div class="abs" style="left:0;top:35.5px;width:46px;height:4px;background:#bcbcbc"></div>
<svg class="abs" style="left:1160px;top:0" width="24" height="12" viewBox="0 0 24 12"><rect x="4.9" y="-6" width="14.4" height="14.3" rx="2.6" fill="#fff"/><rect x="5.7" y="-6" width="12.8" height="13.4" rx="2" fill="#414342"/><path d="M8.6 0.4H15.6" stroke="#e4e4e4" stroke-width="1.9"/><path d="M12.1 -1V4.3" stroke="#f0f0f0" stroke-width="1.7"/></svg>
<div class="abs" style="left:25px;top:239px;width:20.4px;height:18.6px;background:#fafbfc;border-radius:4px;box-shadow:0 0 2px rgba(0,0,0,.28)"></div>
<svg class="abs" style="left:29px;top:243px" width="12" height="12" viewBox="0 0 12 12"><path d="M6 0.5V11.5M0.5 6H11.5" stroke="#444746" stroke-width="1.4"/></svg>
<svg class="abs" style="left:0;top:0" width="200" height="260" viewBox="0 0 200 260"><rect x="43.8" y="217.25" width="134.3" height="32.6" fill="none" stroke="#a8c7fa" stroke-width="2"/><rect x="45.8" y="219.25" width="130.3" height="28.65" fill="#fff" stroke="#0b57d0" stroke-width="2"/><path d="M178.6 249 V245.6 L181.2 249Z" fill="#0b57d0"/></svg>
</div>
<div class="abs" style="left:1233px;top:15px;width:1px;height:723px;background:#fcfdfc"></div>
<div class="abs pop">
<div class="abs pchip" style="top:0;transform:translateY(6.6px);background:#ffcfc9;color:#b10202;-webkit-text-stroke:.2px #b10202">English 101</div>
<div class="abs pchip" style="top:0;transform:translateY(38.5px);background:#ffc8aa;color:#753800;-webkit-text-stroke:.2px #753800">Psych 101</div>
<div class="abs pchip" style="top:0;transform:translateY(70.4px);background:#ffe5a0;color:#473821;-webkit-text-stroke:.2px #473821">Algebra</div>
<div class="abs pchip" style="top:0;transform:translateY(102.3px);background:#d4edbc;color:#11734b;-webkit-text-stroke:.2px #11734b">Biology</div>
<div class="abs pchip" style="top:0;transform:translateY(134.2px);background:#c6dbe1;color:#215a6c;-webkit-text-stroke:.2px #215a6c">History</div>
<div class="abs pchip" style="top:0;transform:translateY(166.1px);background:#e6cff2;color:#5a3286;-webkit-text-stroke:.2px #5a3286">Spanish</div>
<div class="abs" style="left:0;top:193px;width:189px;height:1px;background:#dadce0"></div>
<svg class="abs" style="left:0;top:0" width="190" height="227" viewBox="0 0 190 227"><g transform="translate(162.6,217.3) rotate(-44.6)"><path d="M0.3 0 L1.9 -1.55 L17 -1.55 L17 1.55 L1.9 1.55 Z" fill="none" stroke="#3c4043" stroke-width="1.15" stroke-linejoin="round"/><rect x="13.4" y="-1.8" width="4" height="3.6" rx="0.5" fill="#3c4043"/></g></svg>
</div>
<div class="abs" style="left:0;top:738px;width:1445px;height:14px;background:#fff;border-top:1px solid #d9dadb;border-bottom:1px solid #dfe1e3"></div>
<div class="abs" style="left:0;top:738px;width:46px;height:13px;background:#f3f3f3;border-right:1px solid #c4c7c5;border-top:1px solid #c4c7c5"></div>
<div class="abs" style="left:0;top:752px;width:1445px;height:36px;background:#f6fafd"></div>
<div class="abs" style="left:253px;top:752px;width:157px;height:36px;background:#e1e9f7"></div>
<svg class="abs" style="left:55.9px;top:765.5px" width="10.6" height="10.6" viewBox="0 0 10.6 10.6"><path d="M5.3 0V10.6M0 5.3H10.6" stroke="#444746" stroke-width="1.5"/></svg>
<svg class="abs" style="left:94px;top:766px" width="14.2" height="10" viewBox="0 0 14.2 10"><path d="M0 1H14.2M0 5H14.2M0 9H14.2" stroke="#444746" stroke-width="1.55"/></svg>
<div class="abs tabtxt" style="left:146.2px;top:762px;color:#444746">Dashboard</div>
<svg class="abs" style="left:233.0px;top:768.6px" width="7.6" height="4" viewBox="0 0 7.6 4"><path d="M0.2 0.1H7.4L3.8 3.9Z" fill="#444746"/></svg>
<div class="abs tabtxt" style="left:264.5px;top:762px;color:#0b57d0;font-weight:bold;letter-spacing:.3px;-webkit-text-stroke:0">Assignment List</div>
<svg class="abs" style="left:390.2px;top:768.6px" width="7.6" height="4" viewBox="0 0 7.6 4"><path d="M0.2 0.1H7.4L3.8 3.9Z" fill="#0b57d0"/></svg>
<div class="abs tabtxt" style="left:422.4px;top:762px;color:#444746">Combined Lists</div>
<svg class="abs" style="left:541.0px;top:768.6px" width="7.6" height="4" viewBox="0 0 7.6 4"><path d="M0.2 0.1H7.4L3.8 3.9Z" fill="#444746"/></svg>
<div class="abs tabtxt" style="left:573.6px;top:762px;color:#444746">Past Assignments List</div>
<svg class="abs" style="left:736.4px;top:768.6px" width="7.6" height="4" viewBox="0 0 7.6 4"><path d="M0.2 0.1H7.4L3.8 3.9Z" fill="#444746"/></svg>
<div class="abs tabtxt" style="left:769.2px;top:762px;color:#444746">Worksheet</div>
<svg class="abs" style="left:853.6px;top:768.6px" width="7.6" height="4" viewBox="0 0 7.6 4"><path d="M0.2 0.1H7.4L3.8 3.9Z" fill="#444746"/></svg>
<svg class="abs" style="left:0;top:776px" width="12" height="12" viewBox="0 0 12 12"><path d="M0 2.5 V12 H10.5 Q0.5 11.5 0 2.5Z" fill="#2c2611"/></svg>
</div>
</body></html>
